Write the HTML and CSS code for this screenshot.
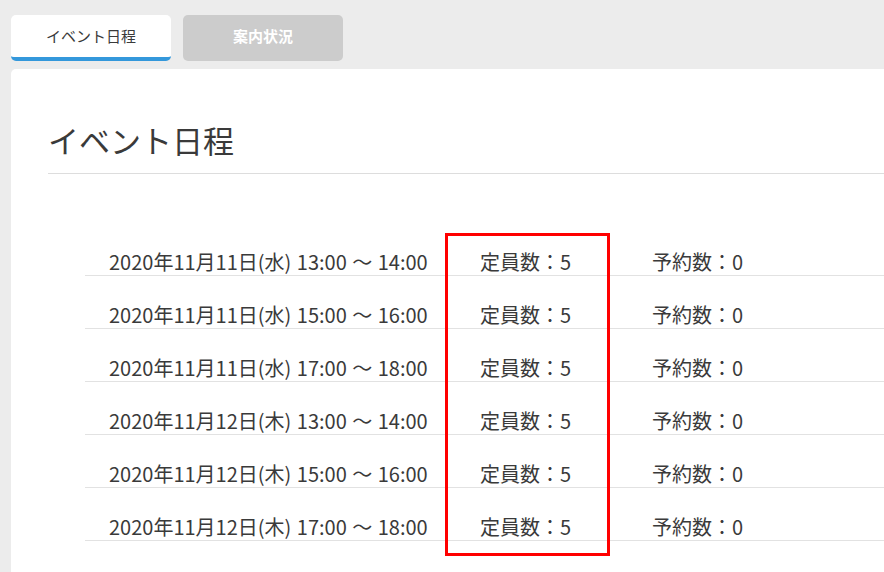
FILE: index.html
```html
<!DOCTYPE html>
<html lang="ja">
<head>
    <meta charset="UTF-8">
    <title>イベント日程</title>
    <link rel="stylesheet" href="styles.css">
</head>
<body>
    <div class="tabs">
        <div class="tab active">イベント日程</div>
        <div class="tab">案内状況</div>
    </div>
    <div class="panel">
        <h1 class="title">イベント日程</h1>
        <div class="schedule">
            <div class="row">
                <span class="date">2020年11月11日(水) 13:00 ～ 14:00</span>
                <span class="capacity">定員数：5</span>
                <span class="booked">予約数：0</span>
            </div>
            <div class="row">
                <span class="date">2020年11月11日(水) 15:00 ～ 16:00</span>
                <span class="capacity">定員数：5</span>
                <span class="booked">予約数：0</span>
            </div>
            <div class="row">
                <span class="date">2020年11月11日(水) 17:00 ～ 18:00</span>
                <span class="capacity">定員数：5</span>
                <span class="booked">予約数：0</span>
            </div>
            <div class="row">
                <span class="date">2020年11月12日(木) 13:00 ～ 14:00</span>
                <span class="capacity">定員数：5</span>
                <span class="booked">予約数：0</span>
            </div>
            <div class="row">
                <span class="date">2020年11月12日(木) 15:00 ～ 16:00</span>
                <span class="capacity">定員数：5</span>
                <span class="booked">予約数：0</span>
            </div>
            <div class="row">
                <span class="date">2020年11月12日(木) 17:00 ～ 18:00</span>
                <span class="capacity">定員数：5</span>
                <span class="booked">予約数：0</span>
            </div>
            <div class="highlight"></div>
        </div>
    </div>
</body>
</html>
```

FILE: styles.css
```css
body {
    margin: 0;
    height: 100vh;
    overflow: hidden;
    display: flex;
    flex-direction: column;
    background-color: #ececec;
    font-family: "Noto Sans CJK JP", "Noto Sans", sans-serif;
    color: #3a3a3a;
}
.tabs {
    display: flex;
    gap: 12px;
    padding: 15px 0 0 11px;
}
.tab {
    width: 160px;
    height: 42px;
    line-height: 42px;
    text-align: center;
    font-size: 15px;
    border-radius: 5px;
    background: #cccccc;
    color: #ffffff;
    font-weight: bold;
    border-bottom: 4px solid transparent;
}
.tab.active {
    background: #ffffff;
    color: #3a3a3a;
    font-weight: normal;
    border-bottom-color: #3498db;
}
.panel {
    flex: 1;
    margin: 8px 0 0 11px;
    padding: 51px 0 0 37px;
    background: #ffffff;
    border-radius: 5px 0 0 0;
}
.title {
    margin: 0;
    padding-bottom: 13px;
    font-size: 31px;
    line-height: 40px;
    font-weight: normal;
    border-bottom: 1px solid #dddddd;
}
.schedule {
    position: relative;
    margin: 49px 0 0 37px;
}
.row {
    display: grid;
    grid-template-columns: 371px 172px auto;
    padding: 26px 0 0 24px;
    height: 26px;
    line-height: 26px;
    font-size: 20px;
    border-bottom: 1px solid #e2e2e2;
}
.date {
    word-spacing: 1px;
}
.highlight {
    position: absolute;
    left: 360px;
    top: 10px;
    width: 159px;
    height: 317px;
    border: 3px solid #ff0000;
}
```
